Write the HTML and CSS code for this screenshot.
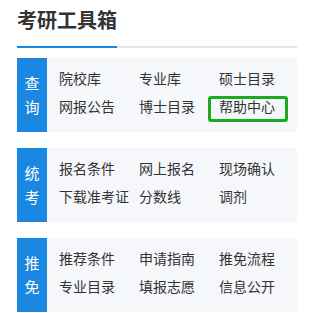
FILE: index.html
```html
<!DOCTYPE html>
<html lang="zh-CN">
<head>
<meta charset="utf-8">
<title>考研工具箱</title>
<link rel="stylesheet" href="styles.css">
</head>
<body>
<div class="toolbox">
  <h1 class="title">考研工具箱</h1>
  <div class="card">
    <div class="side"><span>查</span><span>询</span></div>
    <div class="links">
      <a class="item">院校库</a>
      <a class="item">专业库</a>
      <a class="item">硕士目录</a>
      <a class="item">网报公告</a>
      <a class="item">博士目录</a>
      <a class="item highlight">帮助中心</a>
    </div>
  </div>
  <div class="card">
    <div class="side"><span>统</span><span>考</span></div>
    <div class="links">
      <a class="item">报名条件</a>
      <a class="item">网上报名</a>
      <a class="item">现场确认</a>
      <a class="item">下载准考证</a>
      <a class="item">分数线</a>
      <a class="item">调剂</a>
    </div>
  </div>
  <div class="card">
    <div class="side"><span>推</span><span>免</span></div>
    <div class="links">
      <a class="item">推荐条件</a>
      <a class="item">申请指南</a>
      <a class="item">推免流程</a>
      <a class="item">专业目录</a>
      <a class="item">填报志愿</a>
      <a class="item">信息公开</a>
    </div>
  </div>
</div>
</body>
</html>
```
FILE: styles.css
```css
html, body {
  margin: 0;
  padding: 0;
  background: #ffffff;
}
body {
  font-family: "Noto Sans CJK SC", "Noto Sans", sans-serif;
  color: #333333;
}
.toolbox {
  padding: 6px 17px 0 17px;
}
.title {
  margin: 0;
  font-size: 20px;
  line-height: 28px;
  font-weight: 700;
  color: #333333;
  padding-bottom: 12px;
  border-bottom: 2px solid #e6e6e6;
  position: relative;
}
.title::after {
  content: "";
  position: absolute;
  left: 0;
  bottom: -2px;
  width: 100px;
  height: 2px;
  background: #1a87e0;
}
.card {
  display: flex;
  height: 74px;
  background: #f5f7fa;
  margin-top: 16px;
}
.title + .card {
  margin-top: 10px;
}
.side {
  width: 30px;
  flex: none;
  background: #1a87e0;
  color: #ffffff;
  display: flex;
  flex-direction: column;
  align-items: center;
  justify-content: center;
  font-size: 15px;
  line-height: 24px;
}
.links {
  display: grid;
  grid-template-columns: 80px 80px 80px;
  grid-auto-rows: 28px;
  padding: 6px 0 0 12px;
  font-size: 14px;
  line-height: 28px;
}
.item {
  color: #333333;
  text-decoration: none;
  white-space: nowrap;
  position: relative;
}
.highlight::after {
  content: "";
  position: absolute;
  left: -11px;
  top: 4px;
  width: 80px;
  height: 26px;
  box-sizing: border-box;
  border: 3px solid #1aab24;
  border-radius: 3px;
}
```
